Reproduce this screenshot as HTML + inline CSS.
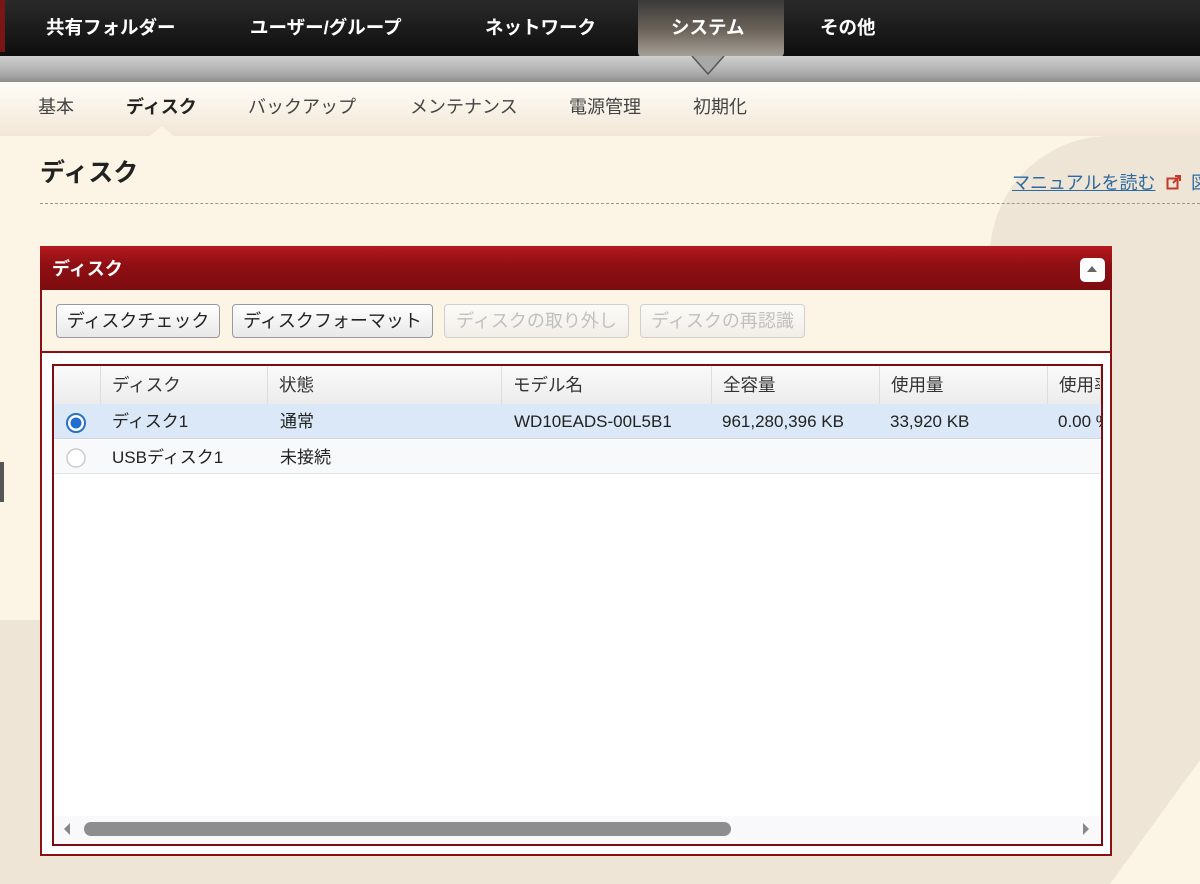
<!DOCTYPE html>
<html><head><meta charset="utf-8"><style>
*{margin:0;padding:0;box-sizing:border-box}
html,body{width:1200px;height:884px;overflow:hidden}
body{background:#fcf5e6;font-family:"Liberation Sans","Noto Sans CJK JP",sans-serif;position:relative;color:#222}
.abs{position:absolute}
.top{left:0;top:0;width:1200px;height:56px;background:linear-gradient(#2a2a2a,#0e0e0e)}
.top span{position:absolute;top:16px;color:#fff;font-weight:bold;font-size:18.5px;line-height:24px}
.act{left:638px;top:0;width:146px;height:58px;border-radius:0 0 6px 6px;background:linear-gradient(#3a3a3a 0%,#6a6258 50%,#a8a39b 100%)}
.band{left:0;top:56px;width:1200px;height:26px;background:linear-gradient(#d0d0d0,#a9a9a9 70%,#8d8d8d)}
.sub{left:0;top:82px;width:1200px;height:54px;background:linear-gradient(#fffdf8,#f2e6d6)}
.sub span{position:absolute;top:13px;font-size:18px;line-height:24px;color:#444}
.btn{position:absolute;top:304px;height:34px;border:1px solid #9a9a9a;border-radius:4px;background:linear-gradient(#fff,#e8e8e8);font-size:18px;line-height:32px;text-align:center;color:#222;white-space:nowrap}
.dis{color:#c0c0c0;border-color:#cfcfcf;background:linear-gradient(#fdfbf6,#f1eee8)}
.th{position:absolute;top:366px;height:38px;background:linear-gradient(#fafafa,#ececec);border-right:1px solid #ddd;font-size:17.5px;line-height:38px;padding-left:11px;color:#333;white-space:nowrap}
.td{position:absolute;font-size:17px;line-height:20px;color:#222;white-space:nowrap}
</style></head><body>
<div class="abs" style="left:990px;top:136px;width:210px;height:748px;background:#eee5d7;border-radius:120px 0 0 0"></div>
<div class="abs" style="left:0;top:620px;width:1200px;height:264px;background:#eee5d7"></div>
<svg class="abs" style="left:1100px;top:740px" width="100" height="144"><path d="M10 144 L100 20 L100 144Z" fill="#fcf5e6"/></svg>
<div class="abs top"></div>
<div class="abs" style="left:0;top:0;width:5px;height:52px;background:#7a1515"></div>
<div class="abs act"></div>
<div class="abs top" style="background:none">
<span style="left:46px">共有フォルダー</span><span style="left:250px">ユーザー/グループ</span><span style="left:485px">ネットワーク</span><span style="left:671px">システム</span><span style="left:820px">その他</span></div>
<div class="abs band"></div>
<div class="abs" style="left:690px;top:56px;width:40px;height:22px"><svg width="40" height="22"><path d="M2 0 L18 18 L34 0" fill="#a8a8a8" stroke="#555" stroke-width="1.5"/></svg></div>
<div class="abs sub"><span style="left:38px">基本</span><span style="left:126px;font-weight:bold;color:#222">ディスク</span><span style="left:248px">バックアップ</span><span style="left:410px">メンテナンス</span><span style="left:569px">電源管理</span><span style="left:693px">初期化</span></div>
<svg class="abs" style="left:150px;top:124px" width="24" height="12"><path d="M0 12 L12 2 L24 12Z" fill="#fcf5e6"/></svg>
<div class="abs" style="left:40px;top:158px;font-size:25px;line-height:30px;font-weight:bold;color:#222">ディスク</div>
<div class="abs" style="left:40px;top:203px;width:1160px;border-top:1px dashed #999"></div>
<div class="abs" style="left:1012px;top:172px;font-size:18px;line-height:22px;color:#2e6aa0;text-decoration:underline;white-space:nowrap">マニュアルを読む</div>
<svg class="abs" style="left:1166px;top:174px" width="16" height="16"><rect x="1.5" y="4.5" width="10" height="10" fill="none" stroke="#c0392b" stroke-width="2"/><path d="M7 9 L14 2 M9 2 H14 V7" stroke="#c0392b" stroke-width="2" fill="none"/></svg>
<div class="abs" style="left:1191px;top:172px;font-size:18px;line-height:22px;color:#2e6aa0">図</div>
<div class="abs" style="left:40px;top:246px;width:1072px;height:610px;border:2px solid #8b1014;background:#fcf5e6"></div>
<div class="abs" style="left:40px;top:246px;width:1072px;height:44px;background:linear-gradient(#b5191d,#8e0f13 45%,#7d0c10)"></div>
<div class="abs" style="left:52px;top:257px;font-size:18px;line-height:24px;font-weight:bold;color:#fff">ディスク</div>
<div class="abs" style="left:1080px;top:258px;width:25px;height:24px;background:#fff;border-radius:5px"></div>
<svg class="abs" style="left:1085px;top:263px" width="14" height="12"><path d="M2 9 L7 3 L12 9Z" fill="#666"/></svg>
<div class="btn" style="left:56px;width:164px">ディスクチェック</div>
<div class="btn" style="left:232px;width:201px">ディスクフォーマット</div>
<div class="btn dis" style="left:444px;width:185px">ディスクの取り外し</div>
<div class="btn dis" style="left:640px;width:165px">ディスクの再認識</div>
<div class="abs" style="left:42px;top:351px;width:1068px;height:503px;border-top:2px solid #8b1014;background:#fff"></div>
<div class="abs" style="left:52px;top:364px;width:1051px;height:482px;border:2px solid #7d0c10;background:#fff;overflow:hidden"></div>
<div class="th" style="left:54px;width:47px"></div>
<div class="th" style="left:101px;width:167px">ディスク</div>
<div class="th" style="left:268px;width:234px">状態</div>
<div class="th" style="left:502px;width:210px">モデル名</div>
<div class="th" style="left:712px;width:168px">全容量</div>
<div class="th" style="left:880px;width:168px">使用量</div>
<div class="th" style="left:1048px;width:53px;overflow:hidden">使用率</div>
<div class="abs" style="left:54px;top:404px;width:1047px;height:35px;background:#dbe8f7;border-bottom:1px solid #c8d6e8"></div>
<div class="abs" style="left:54px;top:440px;width:1047px;height:34px;background:#f8f9fb;border-bottom:1px solid #e2e2e2"></div>
<svg class="abs" style="left:65px;top:412px" width="22" height="22"><circle cx="11" cy="11" r="9" fill="#fff" stroke="#2a6fc0" stroke-width="2"/><circle cx="11" cy="11" r="5.5" fill="#1f6fd0"/></svg>
<svg class="abs" style="left:65px;top:447px" width="22" height="22"><circle cx="11" cy="11" r="9" fill="#fff" stroke="#ccc" stroke-width="1.5"/></svg>
<div class="td" style="left:112px;top:412px">ディスク1</div>
<div class="td" style="left:280px;top:412px">通常</div>
<div class="td" style="left:514px;top:412px">WD10EADS-00L5B1</div>
<div class="td" style="left:722px;top:412px">961,280,396 KB</div>
<div class="td" style="left:890px;top:412px">33,920 KB</div>
<div class="td" style="left:1058px;top:412px;width:43px;overflow:hidden">0.00 %</div>
<div class="td" style="left:112px;top:448px">USBディスク1</div>
<div class="td" style="left:280px;top:448px">未接続</div>
<div class="abs" style="left:54px;top:816px;width:1047px;height:28px;background:#f9f9fb"></div>
<div class="abs" style="left:84px;top:822px;width:647px;height:14px;background:#8d8d8d;border-radius:7px"></div>
<svg class="abs" style="left:62px;top:822px" width="10" height="14"><path d="M8 1 L2 7 L8 13Z" fill="#888"/></svg>
<svg class="abs" style="left:1081px;top:822px" width="10" height="14"><path d="M2 1 L8 7 L2 13Z" fill="#888"/></svg>
<div class="abs" style="left:0;top:462px;width:4px;height:40px;background:#555"></div>
</body></html>
